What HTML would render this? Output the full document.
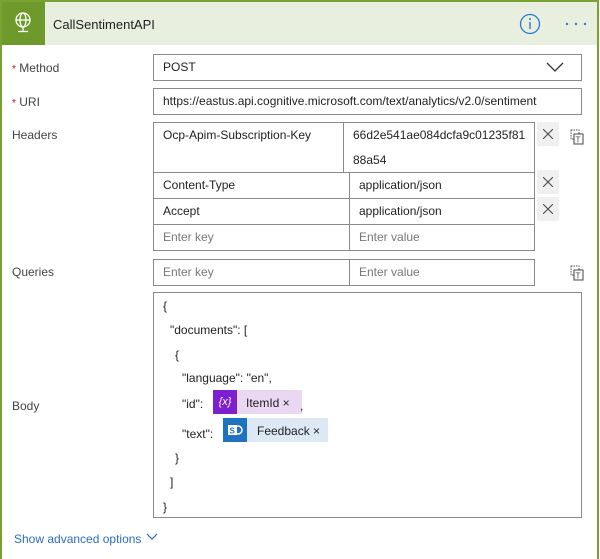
<!DOCTYPE html><html><head><style>
*{box-sizing:border-box;margin:0;padding:0}
body{width:600px;height:559px;background:#fff;font-family:"Liberation Sans",sans-serif;font-size:12px;color:#222;position:relative;overflow:hidden}
.card{position:absolute;left:0;top:0;width:599px;height:559px;border:2px solid #7aa232;border-bottom:none}
.hdr{position:absolute;left:0;top:0;width:595px;height:43px;background:#e9efdf}
.ico{position:absolute;left:0;top:0;width:43px;height:43px;background:#6e9a2b}
.ab{position:absolute}
.box{position:absolute;border:1px solid #8a8a8a;background:#fff;padding-left:9px;line-height:24px;white-space:nowrap}
.lbl{position:absolute;left:12px;color:#444}
.req{color:#c00;font-size:10px}
.ph{color:#777}
.x{position:absolute;width:22px;height:24px;background:#f0f0f0}
.x svg{position:absolute;left:6px;top:7px}
.t{position:absolute;white-space:nowrap}
</style></head><body>
<div class="card">
<div class="hdr"></div>
<div class="ico"><svg width="43" height="43" viewBox="0 0 43 43"><g fill="none" stroke="#fff" stroke-width="1.3"><circle cx="21" cy="18" r="7"/><ellipse cx="21" cy="18" rx="3" ry="7"/><line x1="14" y1="18" x2="28" y2="18"/><line x1="21" y1="25" x2="21" y2="29"/><line x1="16" y1="29.5" x2="26" y2="29.5"/></g></svg></div>
<div class="t" style="left:51px;top:15px;font-size:13px;color:#222">CallSentimentAPI</div>
<svg class="ab" style="left:517px;top:11px" width="22" height="22"><circle cx="11" cy="11" r="9.5" fill="none" stroke="#2a7ad5" stroke-width="1.3"/><line x1="11" y1="9" x2="11" y2="16" stroke="#2a7ad5" stroke-width="1.4"/><circle cx="11" cy="6" r="1" fill="#2a7ad5"/></svg>
<svg class="ab" style="left:563px;top:20px" width="24" height="4"><circle cx="2" cy="2" r="1.2" fill="#2a7ad5"/><circle cx="11" cy="2" r="1.2" fill="#2a7ad5"/><circle cx="20" cy="2" r="1.2" fill="#2a7ad5"/></svg>
</div>
<div class="lbl" style="top:61px"><span class="req">*</span> Method</div>
<div class="box" style="left:153px;top:54px;width:429px;height:27px">POST</div>
<svg class="ab" style="left:546px;top:61px" width="18" height="12"><polyline points="1,2 9,10 17,2" fill="none" stroke="#333" stroke-width="1.3"/></svg>
<div class="lbl" style="top:95px"><span class="req">*</span> URI</div>
<div class="box" style="left:153px;top:88px;width:429px;height:27px">https://eastus.api.cognitive.microsoft.com/text/analytics/v2.0/sentiment</div>
<div class="lbl" style="top:128px">Headers</div>
<div class="box" style="left:153px;top:122px;width:191px;height:51px;line-height:24px">Ocp-Apim-Subscription-Key</div>
<div class="box" style="left:343px;top:122px;width:192px;height:51px;line-height:25px">66d2e541ae084dcfa9c01235f81<br>88a54</div>
<div class="x" style="left:537px;top:122px"><svg width="10" height="10"><path d="M0 0L10 10M10 0L0 10" stroke="#444" stroke-width="1"/></svg></div>
<div class="box" style="left:153px;top:172px;width:197px;height:27px">Content-Type</div>
<div class="box" style="left:349px;top:172px;width:186px;height:27px">application/json</div>
<div class="x" style="left:537px;top:170px"><svg width="10" height="10"><path d="M0 0L10 10M10 0L0 10" stroke="#444" stroke-width="1"/></svg></div>
<div class="box" style="left:153px;top:198px;width:197px;height:27px">Accept</div>
<div class="box" style="left:349px;top:198px;width:186px;height:27px">application/json</div>
<div class="x" style="left:537px;top:197px"><svg width="10" height="10"><path d="M0 0L10 10M10 0L0 10" stroke="#444" stroke-width="1"/></svg></div>
<div class="box ph" style="left:153px;top:224px;width:197px;height:27px">Enter key</div>
<div class="box ph" style="left:349px;top:224px;width:186px;height:27px">Enter value</div>
<svg class="ab" style="left:570px;top:129px" width="14" height="16"><rect x="1" y="1" width="8" height="9" fill="none" stroke="#555" stroke-dasharray="1.5 1"/><rect x="4" y="5" width="9" height="10" fill="#fff" stroke="#444"/><text x="5.5" y="13.5" font-size="8" font-family="Liberation Sans" fill="#444">T</text></svg>
<div class="lbl" style="top:265px">Queries</div>
<div class="box ph" style="left:153px;top:259px;width:197px;height:27px">Enter key</div>
<div class="box ph" style="left:349px;top:259px;width:186px;height:27px">Enter value</div>
<svg class="ab" style="left:570px;top:265px" width="14" height="16"><rect x="1" y="1" width="8" height="9" fill="none" stroke="#555" stroke-dasharray="1.5 1"/><rect x="4" y="5" width="9" height="10" fill="#fff" stroke="#444"/><text x="5.5" y="13.5" font-size="8" font-family="Liberation Sans" fill="#444">T</text></svg>
<div class="lbl" style="top:399px">Body</div>
<div class="box" style="left:153px;top:292px;width:429px;height:226px"></div>
<div class="t" style="left:163px;top:299px">{</div>
<div class="t" style="left:170px;top:323px">"documents": [</div>
<div class="t" style="left:175px;top:348px">{</div>
<div class="t" style="left:182px;top:371px">"language": "en",</div>
<div class="t" style="left:182px;top:397px">"id":</div>
<div class="ab" style="left:213px;top:390px;width:89px;height:24px;background:#ead8f3"></div>
<div class="ab" style="left:213px;top:390px;width:24px;height:24px;background:#7c1fcf;color:#fff;font-size:11px;line-height:24px;text-align:center;font-style:italic">{x}</div>
<div class="t" style="left:246px;top:396px">ItemId ×</div>
<div class="t" style="left:300px;top:399px">,</div>
<div class="t" style="left:182px;top:427px">"text":</div>
<div class="ab" style="left:223px;top:418px;width:105px;height:24px;background:#dce8f4"></div>
<div class="ab" style="left:223px;top:418px;width:24px;height:24px;background:#1e72be"><svg width="24" height="24"><rect x="5" y="7" width="9" height="10" fill="#fff"/><circle cx="15" cy="12" r="4" fill="none" stroke="#fff" stroke-width="1.5"/><text x="6.5" y="15.5" font-size="8" font-weight="bold" fill="#1e72be" font-family="Liberation Sans">S</text></svg></div>
<div class="t" style="left:257px;top:424px">Feedback ×</div>
<div class="t" style="left:175px;top:451px">}</div>
<div class="t" style="left:170px;top:475px">]</div>
<div class="t" style="left:163px;top:500px">}</div>
<div class="t" style="left:14px;top:532px;color:#2a6ebb">Show advanced options</div>
<svg class="ab" style="left:146px;top:533px" width="12" height="8"><polyline points="1,1 6,6 11,1" fill="none" stroke="#2a6ebb" stroke-width="1.2"/></svg>
</body></html>
